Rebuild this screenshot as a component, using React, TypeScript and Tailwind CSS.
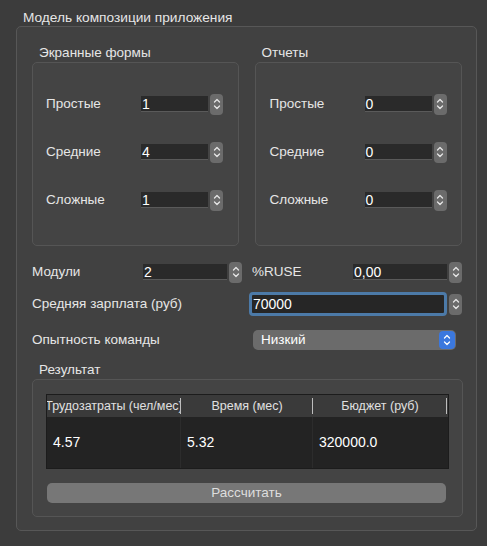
import type { ReactNode } from 'react';

const font = { fontFamily: '"Liberation Sans", "Noto Sans", Arial, sans-serif' };

function Arrows({ blue = false }: { blue?: boolean }) {
  return (
    <svg width="8" height="14" viewBox="0 0 8 14" fill="none">
      <path d="M1.5 5 L4 2.5 L6.5 5" stroke={blue ? '#ffffff' : '#e6e6e6'} strokeWidth="1.3" strokeLinecap="round" strokeLinejoin="round" />
      <path d="M1.5 9 L4 11.5 L6.5 9" stroke={blue ? '#ffffff' : '#e6e6e6'} strokeWidth="1.3" strokeLinecap="round" strokeLinejoin="round" />
    </svg>
  );
}

function Spin({ value, width }: { value: string; width: string }) {
  return (
    <div className="flex items-center">
      <div className={`${width} h-[16px] bg-[#2a2a2a] border-b border-[#5a5a5a] text-[14px] leading-[16px] text-white pl-[1px]`}>
        {value}
      </div>
      <div className="ml-[2px] w-[13px] h-[21px] rounded-[4px] bg-[#6b6b6b] flex items-center justify-center">
        <Arrows />
      </div>
    </div>
  );
}

function Box({ title, className = '', children }: { title: string; className?: string; children: ReactNode }) {
  return (
    <div className={className}>
      <div className="pl-[7px] text-[13.5px] leading-[16px] text-[#e6e6e6]">{title}</div>
      <div className="mt-[1px] border border-[#555555] rounded-[5px] bg-[#444444]">{children}</div>
    </div>
  );
}

function Row({ label, value }: { label: string; value: string }) {
  return (
    <div className="flex items-center h-[20px]">
      <div className="w-[95px] text-[13.5px] text-[#e6e6e6]">{label}</div>
      <Spin value={value} width="w-[67px]" />
    </div>
  );
}

export default function App() {
  return (
    <div style={font} className="w-[487px] h-[546px] bg-[#3c3c3c] pt-[10px] pl-[16px] pr-[10px]">
      <div className="pl-[7px] text-[13.7px] leading-[16px] text-[#e6e6e6]">Модель композиции приложения</div>
      <div className="w-[461px] h-[505px] border border-[#575757] rounded-[5px] bg-[#414141] pt-[18px] pl-[15px] pr-[14px]">
        <div className="flex gap-[16px]">
          <Box title="Экранные формы" className="w-[207px]">
            <div className="h-[182px] pt-[31px] pl-[13px] flex flex-col gap-[28px]">
              <Row label="Простые" value="1" />
              <Row label="Средние" value="4" />
              <Row label="Сложные" value="1" />
            </div>
          </Box>
          <Box title="Отчеты" className="w-[208px]">
            <div className="h-[182px] pt-[31px] pl-[14px] flex flex-col gap-[28px]">
              <Row label="Простые" value="0" />
              <Row label="Средние" value="0" />
              <Row label="Сложные" value="0" />
            </div>
          </Box>
        </div>

        <div className="mt-[16px] flex items-center h-[20px] text-[13.5px] text-[#e6e6e6]">
          <div className="w-[111px]">Модули</div>
          <Spin value="2" width="w-[84px]" />
          <div className="ml-[10px] w-[101px]">%RUSE</div>
          <Spin value="0,00" width="w-[94px]" />
        </div>

        <div className="mt-[10px] flex items-center h-[24px] text-[13.5px] text-[#e6e6e6]">
          <div className="w-[218px]">Средняя зарплата (руб)</div>
          <div className="w-[199px] h-[24px] rounded-[4px] border-[3px] border-[#4c7aa8] bg-[#262626] text-white leading-[18px] pl-[1px] text-[14px]">
            70000
          </div>
          <div className="ml-[2px] w-[13px] h-[21px] rounded-[4px] bg-[#6b6b6b] flex items-center justify-center">
            <Arrows />
          </div>
        </div>

        <div className="mt-[14px] flex items-center h-[20px] text-[13.5px] text-[#e6e6e6]">
          <div className="w-[221px]">Опытность команды</div>
          <div className="w-[203px] h-[20px] rounded-[5px] bg-[#6b6b6b] flex items-center justify-between pl-[8px] pr-[1px]">
            <span className="text-white">Низкий</span>
            <div className="w-[16px] h-[18px] rounded-[4px] bg-[#3b78de] flex items-center justify-center">
              <Arrows blue />
            </div>
          </div>
        </div>

        <Box title="Результат" className="mt-[12px] w-[431px]">
          <div className="pt-[14px] px-[13px] pb-[13px]">
            <div className="border border-[#1c1c1c] bg-[#232323]">
              <div className="grid grid-cols-[134px_132px_134px] h-[22px] bg-[#3a3a3a] text-[12.5px] text-[#e0e0e0]">
                {['Трудозатраты (чел/мес)', 'Время (мес)', 'Бюджет (руб)'].map((h) => (
                  <div key={h} className="relative flex items-center justify-center overflow-hidden whitespace-nowrap">
                    <span>{h}</span>
                    <div className="absolute right-0 top-[3px] bottom-[3px] w-[1px] bg-[#bdbdbd]" />
                  </div>
                ))}
              </div>
              <div className="grid grid-cols-[134px_132px_134px] h-[51px] text-[14px] text-white">
                <div className="flex items-center pl-[6px] border-r border-[#2c2c2c]">4.57</div>
                <div className="flex items-center pl-[6px] border-r border-[#2c2c2c]">5.32</div>
                <div className="flex items-center pl-[6px]">320000.0</div>
              </div>
            </div>
            <div className="mt-[14px] ml-[1px] w-[399px] h-[20px] rounded-[5px] bg-[#777777] flex items-center justify-center text-[13.5px] text-[#dedede]">
              Рассчитать
            </div>
          </div>
        </Box>
      </div>
    </div>
  );
}
